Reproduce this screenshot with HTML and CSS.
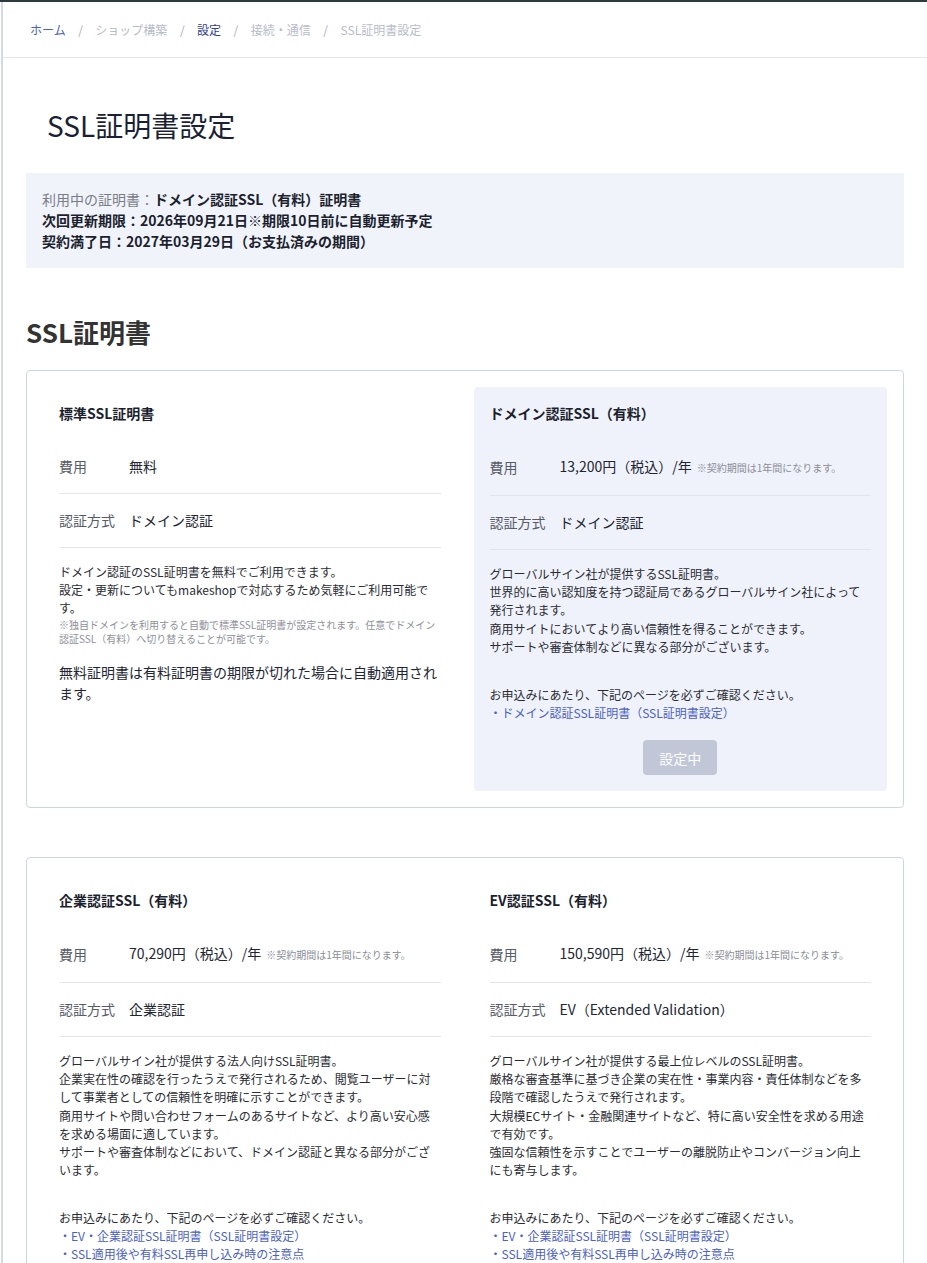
FILE: index.html
```html
<!DOCTYPE html>
<html lang="ja">
<head>
    <meta charset="UTF-8">
    <meta name="viewport" content="width=device-width, initial-scale=1.0">
    <title>SSL証明書設定</title>
    <link rel="stylesheet" href="styles.css">
</head>
<body>
    <div class="page">
        <nav class="breadcrumb">
            <a class="crumb link" href="#">ホーム</a>
            <span class="sep">/</span>
            <span class="crumb">ショップ構築</span>
            <span class="sep">/</span>
            <a class="crumb current" href="#">設定</a>
            <span class="sep">/</span>
            <span class="crumb">接続・通信</span>
            <span class="sep">/</span>
            <span class="crumb">SSL証明書設定</span>
        </nav>

        <main class="content">
            <h1 class="page-title">SSL証明書設定</h1>

            <div class="status-box">
                <p><span class="muted">利用中の証明書：</span><strong>ドメイン認証SSL（有料）証明書</strong></p>
                <p><strong>次回更新期限：2026年09月21日※期限10日前に自動更新予定</strong></p>
                <p><strong>契約満了日：2027年03月29日（お支払済みの期間）</strong></p>
            </div>

            <h2 class="section-title">SSL証明書</h2>

            <section class="plan-card">
                <div class="plan">
                    <h3 class="plan-name">標準SSL証明書</h3>
                    <div class="plan-row">
                        <span class="row-label">費用</span>
                        <span class="row-value">無料</span>
                    </div>
                    <div class="plan-row">
                        <span class="row-label">認証方式</span>
                        <span class="row-value">ドメイン認証</span>
                    </div>
                    <p class="plan-desc">ドメイン認証のSSL証明書を無料でご利用できます。<br>設定・更新についてもmakeshopで対応するため気軽にご利用可能です。</p>
                    <p class="plan-note">※独自ドメインを利用すると自動で標準SSL証明書が設定されます。任意でドメイン認証SSL（有料）へ切り替えることが可能です。</p>
                    <p class="plan-extra">無料証明書は有料証明書の期限が切れた場合に自動適用されます。</p>
                </div>

                <div class="plan active">
                    <h3 class="plan-name">ドメイン認証SSL（有料）</h3>
                    <div class="plan-row">
                        <span class="row-label">費用</span>
                        <span class="row-value">13,200円（税込）/年<small class="fee-note">※契約期間は1年間になります。</small></span>
                    </div>
                    <div class="plan-row">
                        <span class="row-label">認証方式</span>
                        <span class="row-value">ドメイン認証</span>
                    </div>
                    <p class="plan-desc">グローバルサイン社が提供するSSL証明書。<br>世界的に高い認知度を持つ認証局であるグローバルサイン社によって発行されます。<br>商用サイトにおいてより高い信頼性を得ることができます。<br>サポートや審査体制などに異なる部分がございます。</p>
                    <div class="plan-links">
                        <p>お申込みにあたり、下記のページを必ずご確認ください。</p>
                        <a href="#">・ドメイン認証SSL証明書（SSL証明書設定）</a>
                    </div>
                    <div class="plan-action">
                        <button class="btn-current" disabled>設定中</button>
                    </div>
                </div>
            </section>

            <section class="plan-card">
                <div class="plan">
                    <h3 class="plan-name">企業認証SSL（有料）</h3>
                    <div class="plan-row">
                        <span class="row-label">費用</span>
                        <span class="row-value">70,290円（税込）/年<small class="fee-note">※契約期間は1年間になります。</small></span>
                    </div>
                    <div class="plan-row">
                        <span class="row-label">認証方式</span>
                        <span class="row-value">企業認証</span>
                    </div>
                    <p class="plan-desc">グローバルサイン社が提供する法人向けSSL証明書。<br>企業実在性の確認を行ったうえで発行されるため、閲覧ユーザーに対して事業者としての信頼性を明確に示すことができます。<br>商用サイトや問い合わせフォームのあるサイトなど、より高い安心感を求める場面に適しています。<br>サポートや審査体制などにおいて、ドメイン認証と異なる部分がございます。</p>
                    <div class="plan-links">
                        <p>お申込みにあたり、下記のページを必ずご確認ください。</p>
                        <a href="#">・EV・企業認証SSL証明書（SSL証明書設定）</a>
                        <a href="#">・SSL適用後や有料SSL再申し込み時の注意点</a>
                    </div>
                </div>

                <div class="plan">
                    <h3 class="plan-name">EV認証SSL（有料）</h3>
                    <div class="plan-row">
                        <span class="row-label">費用</span>
                        <span class="row-value">150,590円（税込）/年<small class="fee-note">※契約期間は1年間になります。</small></span>
                    </div>
                    <div class="plan-row">
                        <span class="row-label">認証方式</span>
                        <span class="row-value">EV（Extended Validation）</span>
                    </div>
                    <p class="plan-desc">グローバルサイン社が提供する最上位レベルのSSL証明書。<br>厳格な審査基準に基づき企業の実在性・事業内容・責任体制などを多段階で確認したうえで発行されます。<br>大規模ECサイト・金融関連サイトなど、特に高い安全性を求める用途で有効です。<br>強固な信頼性を示すことでユーザーの離脱防止やコンバージョン向上にも寄与します。</p>
                    <div class="plan-links">
                        <p>お申込みにあたり、下記のページを必ずご確認ください。</p>
                        <a href="#">・EV・企業認証SSL証明書（SSL証明書設定）</a>
                        <a href="#">・SSL適用後や有料SSL再申し込み時の注意点</a>
                    </div>
                </div>
            </section>
        </main>
    </div>
</body>
</html>
```

FILE: styles.css
```css
body {
    margin: 0;
    font-family: "Noto Sans CJK JP", "Noto Sans", sans-serif;
    color: #222531;
    background-color: #ffffff;
    border-top: 2px solid #2d3a3f;
}
p {
    margin: 0;
}
a {
    text-decoration: none;
}
.page {
    margin-left: 1px;
    border-left: 2px solid #d3d9e6;
    min-height: 100vh;
}

/* breadcrumb */
.breadcrumb {
    display: flex;
    align-items: center;
    height: 55px;
    padding-left: 27px;
    border-bottom: 1px solid #e4e7ee;
    font-size: 12px;
}
.crumb {
    color: #b7bbc8;
}
.crumb.link {
    color: #4a62c4;
}
.crumb.current {
    color: #2f418f;
}
.sep {
    color: #a9aebb;
    margin: 0 12.5px;
}

/* main */
.content {
    padding: 0 23px 40px 23px;
}
.page-title {
    margin: 47px 0 28px 21px;
    font-size: 28px;
    font-weight: 400;
    line-height: 40px;
    color: #1b1f36;
}
.status-box {
    background-color: #f0f3fa;
    padding: 16px 16px;
    font-size: 14px;
    line-height: 21px;
}
.status-box strong {
    font-weight: 700;
    color: #1c1f2e;
}
.muted {
    color: #7a7d86;
}
.section-title {
    margin: 46px 0 20px 0;
    font-size: 26px;
    line-height: 36px;
    font-weight: 700;
    color: #333333;
}

/* plan cards */
.plan-card {
    display: grid;
    grid-template-columns: 1fr 1fr;
    gap: 17px;
    padding: 16px;
    border: 1px solid #cdd4e2;
    border-radius: 4px;
    margin-bottom: 49px;
}
.plan {
    padding: 16px;
    border-radius: 4px;
}
.plan.active {
    background-color: #eff2fa;
}
.plan-name {
    margin: 0 0 17px 0;
    font-size: 14px;
    line-height: 20px;
    font-weight: 700;
    color: #1c1f2e;
}
.plan-row {
    display: flex;
    align-items: center;
    padding: 16px 0 17px 0;
    border-bottom: 1px solid #e2e5ed;
    font-size: 14px;
    line-height: 20px;
}
.row-label {
    width: 70px;
    flex-shrink: 0;
    color: #585c68;
}
.row-value {
    color: #222531;
}
.fee-note {
    margin-left: 5px;
    font-size: 10px;
    color: #8a8d96;
}
.plan-desc {
    margin-top: 15px;
    font-size: 12px;
    line-height: 18.2px;
    color: #2a2c33;
}
.plan-note {
    font-size: 10px;
    line-height: 14px;
    color: #8e9099;
}
.plan-extra {
    margin-top: 16px;
    font-size: 14px;
    line-height: 21px;
    color: #222531;
}
.plan-links {
    margin-top: 30px;
    font-size: 12px;
    line-height: 18px;
    color: #2a2c33;
}
.plan-links a {
    display: block;
    color: #4b5fc4;
}
.plan-action {
    display: flex;
    justify-content: center;
    margin-top: 18px;
}
.btn-current {
    width: 74px;
    height: 35px;
    border: none;
    border-radius: 4px;
    background-color: #c2c7d8;
    color: #ffffff;
    font-family: inherit;
    font-size: 14px;
}
```
